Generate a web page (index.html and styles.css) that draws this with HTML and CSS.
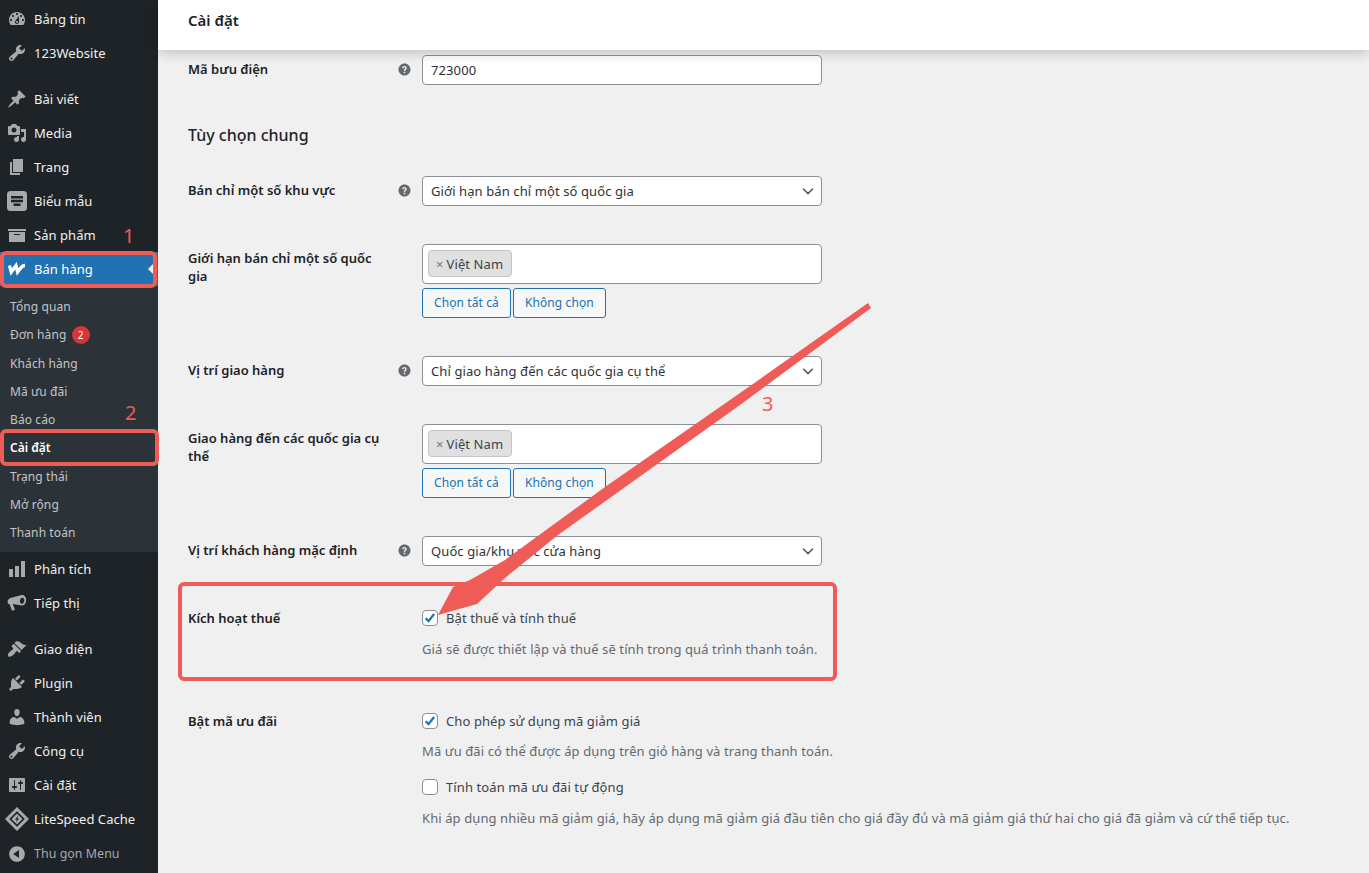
FILE: index.html
```html
<!DOCTYPE html>
<html lang="vi">
<head>
  <meta charset="UTF-8">
  <meta name="viewport" content="width=device-width, initial-scale=1.0">
  <title>Cài đặt</title>
  <link rel="stylesheet" href="styles.css">
</head>
<body>
  <svg class="defs" width="0" height="0">
    <symbol id="i-help" viewBox="0 0 20 20"><path d="M10 2c4.420 0 8 3.580 8 8s-3.580 8-8 8-8-3.580-8-8 3.580-8 8-8zm1 13v-2H9v2h2zm1.900-6.500c.2-1.900-1.200-3.200-3-3.200-1.700 0-2.900 1-3.100 2.800l1.900.3c.1-.8.5-1.300 1.200-1.300s1.100.5 1 1.100c-.1.6-.5.9-1 1.300-.7.6-.9 1.200-.9 2h2c0-.5.2-.8.8-1.300.6-.5 1-1 1.100-1.700z" fill-rule="evenodd"/></symbol>
    <symbol id="i-chevron" viewBox="0 0 16 16"><path d="M2.500 5.500l5.500 5.500 5.500-5.500" fill="none" stroke="#50575e" stroke-width="1.800"/></symbol>
    <symbol id="i-wrench" viewBox="0 0 20 20"><path d="M16.680 9.770c-1.340 1.340-3.300 1.670-4.950.99l-5.410 6.520c-.99.99-2.590.99-3.580 0s-.99-2.590 0-3.570l6.520-5.420c-.68-1.650-.35-3.610.99-4.950 1.280-1.280 3.120-1.620 4.720-1.060l-2.890 2.890 2.820 2.820 2.860-2.870c.53 1.580.18 3.390-1.080 4.650zM3.810 16.210c.4.39 1.040.39 1.430 0 .4-.4.4-1.040 0-1.430-.39-.4-1.030-.4-1.430 0-.39.39-.39 1.030 0 1.430z" fill-rule="evenodd"/></symbol>
    <symbol id="i-check" viewBox="0 0 16 16"><path d="M3 8.300l3.300 3.300 6.400-8.200" fill="none" stroke="#2271b1" stroke-width="2.600"/></symbol>
  </svg>

  <div class="container">
    <!-- Sidebar -->
    <nav class="sidebar">
      <ul class="menu">
        <li class="menu-item"><svg class="menu-icon" viewBox="0 0 20 20"><path d="M3.760 16h12.480c1.100-1.370 1.760-3.110 1.760-5 0-4.420-3.580-8-8-8s-8 3.580-8 8c0 1.890.660 3.630 1.760 5zM10 4c.55 0 1 .45 1 1s-.45 1-1 1-1-.45-1-1 .45-1 1-1zM6 6c.55 0 1 .45 1 1s-.45 1-1 1-1-.45-1-1 .45-1 1-1zm8 0c.55 0 1 .45 1 1s-.45 1-1 1-1-.45-1-1 .45-1 1-1zm-5.370 5.550L12 7v6c0 1.100-.9 2-2 2s-2-.9-2-2c0-.57.24-1.080.63-1.450zM4 10c.55 0 1 .45 1 1s-.45 1-1 1-1-.45-1-1 .45-1 1-1zm12 0c.55 0 1 .45 1 1s-.45 1-1 1-1-.45-1-1 .45-1 1-1zm-5 3c0-.55-.45-1-1-1s-1 .45-1 1 .45 1 1 1 1-.45 1-1z" fill-rule="evenodd"/></svg>Bảng tin</li>
        <li class="menu-item"><svg class="menu-icon"><use href="#i-wrench"/></svg>123Website</li>
      </ul>
      <ul class="menu">
        <li class="menu-item"><svg class="menu-icon" viewBox="0 0 20 20"><path d="M10.440 3.020l1.820-1.820 6.360 6.350-1.830 1.820c-1.050-.68-2.480-.57-3.410.36l-.75.75c-.92.93-1.040 2.350-.35 3.410l-1.830 1.820-2.410-2.410-2.800 2.790c-.42.42-3.380 2.710-3.800 2.290s1.860-3.390 2.280-3.810l2.790-2.790L4.100 9.360l1.830-1.820c1.050.69 2.480.57 3.400-.36l.75-.75c.93-.92 1.050-2.350.36-3.410z"/></svg>Bài viết</li>
        <li class="menu-item"><svg class="menu-icon" viewBox="0 0 20 20"><path d="M13 11V4c0-.55-.45-1-1-1h-1.670L9 1H5L3.670 3H2c-.55 0-1 .45-1 1v7c0 .55.45 1 1 1h10c.55 0 1-.45 1-1zM7 4.500c1.380 0 2.500 1.120 2.500 2.500S8.380 9.500 7 9.500 4.500 8.380 4.500 7 5.620 4.500 7 4.500zM14 6h5v10.500c0 1.380-1.120 2.500-2.500 2.500S14 17.880 14 16.500s1.120-2.500 2.500-2.500c.17 0 .34.02.5.05V9h-3V6zm-4 8.050V13h2v3.500c0 1.380-1.120 2.500-2.500 2.500S7 17.880 7 16.500 8.120 14 9.500 14c.17 0 .34.02.5.05z" fill-rule="evenodd"/></svg>Media</li>
        <li class="menu-item"><svg class="menu-icon" viewBox="0 0 20 20"><path d="M6 15V2h10v13H6zm-1 1h8v2H3V5h2v11z"/></svg>Trang</li>
        <li class="menu-item"><svg class="menu-icon" viewBox="0 0 20 20"><path d="M3.500 0h13A3.500 3.500 0 0 1 20 3.500v13a3.500 3.500 0 0 1-3.500 3.500h-13A3.500 3.500 0 0 1 0 16.500v-13A3.500 3.500 0 0 1 3.500 0zM4 5v2.400h12V5H4zm0 3.800v2.400h12V8.800H4zm2.500 3.800V15h7v-2.400h-7z" fill-rule="evenodd"/></svg>Biểu mẫu</li>
        <li class="menu-item"><svg class="menu-icon" viewBox="0 0 20 20"><path d="M19 4v2H1V4h18zM2 7h16v10H2V7zm11 3V9H7v1h6z" fill-rule="evenodd"/></svg>Sản phẩm</li>
        <li class="menu-item menu-item-active"><svg class="menu-icon menu-logo" viewBox="0 0 20 20"><path d="M2.500 6.500l1.800 6.500 4.700-6.500 1.600 6.500 2.600-3.300c1-1.300 2-3.200 4.800-3.200" fill="none" stroke="#fff" stroke-width="3.300"/></svg>Bán hàng</li>
        <li>
          <ul class="submenu">
            <li class="submenu-item">Tổng quan</li>
            <li class="submenu-item">Đơn hàng <span class="badge">2</span></li>
            <li class="submenu-item">Khách hàng</li>
            <li class="submenu-item">Mã ưu đãi</li>
            <li class="submenu-item">Báo cáo</li>
            <li class="submenu-item submenu-item-active">Cài đặt</li>
            <li class="submenu-item">Trạng thái</li>
            <li class="submenu-item">Mở rộng</li>
            <li class="submenu-item">Thanh toán</li>
          </ul>
        </li>
        <li class="menu-item"><svg class="menu-icon" viewBox="0 0 20 20"><path d="M18 18V2h-4v16h4zm-6 0V7H8v11h4zm-6 0v-8H2v8h4z"/></svg>Phân tích</li>
        <li class="menu-item"><svg class="menu-icon" viewBox="0 0 20 20"><path d="M17 2.500c1.600.8 2.600 3.300 2 6-.6 2.600-2.400 4.300-4.200 4.100L6 11l-.2.100 2.200 5.600-3 1.100-2.300-6.300C1 11 .4 9.700.6 8.200.9 6.600 2 5.400 3.500 5L13.600 2.300c1.200-.3 2.400-.3 3.400.2zm-1.600 2.300c-1.200 0-2.300 1.300-2.500 3s.7 2.900 1.900 2.900 2.300-1.300 2.500-3-.7-2.900-1.900-2.900z" fill-rule="evenodd"/></svg>Tiếp thị</li>
      </ul>
      <ul class="menu menu-last">
        <li class="menu-item"><svg class="menu-icon" viewBox="0 0 20 20"><path d="M14.480 11.060L7.410 3.990l1.500-1.500c.5-.56 2.300-.47 3.510.32 1.210.8 1.430 1.280 2.910 2.100 1.180.64 2.450 1.260 4.450.85zm-.71.71L6.700 4.700 4.930 6.470c-.39.39-.39 1.020 0 1.410l1.060 1.060c.39.39.39 1.030 0 1.420-.6.6-1.430 1.110-2.210 1.690-.35.26-.7.53-1.010.84C1.430 13.230 .5 16.500 1.500 17.500s3.800-.4 5.200-1.900c.31-.31.58-.66.84-1.010.58-.78 1.090-1.610 1.690-2.210.39-.39 1.030-.39 1.420 0l1.060 1.060c.39.39 1.020.39 1.410 0z"/></svg>Giao diện</li>
        <li class="menu-item"><svg class="menu-icon" viewBox="0 0 20 20"><path d="M13.110 4.360L9.870 7.600 8 5.730l3.240-3.240c.35-.34 1.050-.2 1.560.32.52.51.66 1.210.31 1.550zm-8 1.770l.91-1.120 9.010 9.010-1.190.84c-.71.71-2.630 1.160-3.820 1.160H6.140L4.900 17.260c-.59.59-1.540.59-2.120 0-.59-.58-.59-1.530 0-2.120l1.240-1.240v-3.880c0-1.130.4-3.190 1.090-3.890zm7.260 3.970l3.240-3.240c.34-.35 1.040-.21 1.550.31.52.51.66 1.210.31 1.550l-3.240 3.250z"/></svg>Plugin</li>
        <li class="menu-item"><svg class="menu-icon" viewBox="0 0 20 20"><path d="M10 9.250c-2.270 0-2.730-3.440-2.730-3.440C7 4.020 7.820 2 9.970 2c2.160 0 2.980 2.020 2.710 3.810 0 0-.41 3.440-2.680 3.440zm0 2.570L12.720 10c2.390 0 4.520 2.330 4.520 4.530v2.490s-3.650 1.130-7.240 1.130c-3.650 0-7.240-1.130-7.240-1.130v-2.490c0-2.250 1.940-4.480 4.470-4.480z"/></svg>Thành viên</li>
        <li class="menu-item"><svg class="menu-icon"><use href="#i-wrench"/></svg>Công cụ</li>
        <li class="menu-item"><svg class="menu-icon" viewBox="0 0 20 20"><path d="M18 16V4c0-.55-.45-1-1-1H3c-.55 0-1 .45-1 1v12c0 .55.45 1 1 1h14c.55 0 1-.45 1-1zM8 11h1c.55 0 1 .45 1 1s-.45 1-1 1H8v1.500c0 .28-.22.5-.5.5s-.5-.22-.5-.5V13H6c-.55 0-1-.45-1-1s.45-1 1-1h1V5.500c0-.28.22-.5.5-.5s.5.22.5.5V11zm5-2h-1c-.55 0-1-.45-1-1s.45-1 1-1h1V5.500c0-.28.22-.5.5-.5s.5.22.5.5V7h1c.55 0 1 .45 1 1s-.45 1-1 1h-1v5.500c0 .28-.22.5-.5.5s-.5-.22-.5-.5V9z" fill-rule="evenodd"/></svg>Cài đặt</li>
        <li class="menu-item menu-item-tall"><svg class="menu-icon menu-icon-lg" viewBox="0 0 24 24"><path d="M12 0l12 12-12 12L0 12zm0 4.200L4.200 12l7.800 7.800 7.800-7.800zM12 6.500l5.500 5.500-5.500 5.500L6.500 12zm1 2.200l-3 3.800h1.700L11 15.300l3-3.800h-1.700z" fill-rule="evenodd"/></svg>LiteSpeed Cache</li>
        <li class="menu-item menu-item-muted"><svg class="menu-icon" viewBox="0 0 20 20"><path d="M10 2.160c4.330 0 7.840 3.510 7.840 7.840s-3.510 7.840-7.840 7.840S2.160 14.330 2.160 10 5.710 2.160 10 2.160zm2 11.720V6.120L6.180 9.970z" fill-rule="evenodd"/></svg>Thu gọn Menu</li>
      </ul>
    </nav>

    <!-- Konten -->
    <div class="main-content">
      <div class="header"><h1>Cài đặt</h1></div>
      <form class="settings-form">
        <div class="row">
          <label>Mã bưu điện</label>
          <svg class="help"><use href="#i-help"/></svg>
          <div class="field"><div class="input">723000</div></div>
        </div>

        <h2>Tùy chọn chung</h2>

        <div class="row">
          <label>Bán chỉ một số khu vực</label>
          <svg class="help"><use href="#i-help"/></svg>
          <div class="field"><div class="input">Giới hạn bán chỉ một số quốc gia<svg class="chevron"><use href="#i-chevron"/></svg></div></div>
        </div>

        <div class="row">
          <label>Giới hạn bán chỉ một số quốc gia</label>
          <span></span>
          <div class="field">
            <div class="multi"><span class="tag"><i>×</i>Việt Nam</span></div>
            <div class="actions"><button type="button">Chọn tất cả</button><button type="button">Không chọn</button></div>
          </div>
        </div>

        <div class="row">
          <label>Vị trí giao hàng</label>
          <svg class="help"><use href="#i-help"/></svg>
          <div class="field"><div class="input">Chỉ giao hàng đến các quốc gia cụ thể<svg class="chevron"><use href="#i-chevron"/></svg></div></div>
        </div>

        <div class="row">
          <label>Giao hàng đến các quốc gia cụ thể</label>
          <span></span>
          <div class="field">
            <div class="multi"><span class="tag"><i>×</i>Việt Nam</span></div>
            <div class="actions"><button type="button">Chọn tất cả</button><button type="button">Không chọn</button></div>
          </div>
        </div>

        <div class="row">
          <label>Vị trí khách hàng mặc định</label>
          <svg class="help"><use href="#i-help"/></svg>
          <div class="field"><div class="input">Quốc gia/khu vực cửa hàng<svg class="chevron"><use href="#i-chevron"/></svg></div></div>
        </div>

        <div class="row row-check">
          <label>Kích hoạt thuế</label>
          <span></span>
          <div class="field field-wide">
            <div class="check"><span class="box box-on"><svg><use href="#i-check"/></svg></span>Bật thuế và tính thuế</div>
            <p class="desc">Giá sẽ được thiết lập và thuế sẽ tính trong quá trình thanh toán.</p>
          </div>
        </div>

        <div class="row row-check">
          <label>Bật mã ưu đãi</label>
          <span></span>
          <div class="field field-wide">
            <div class="check"><span class="box box-on"><svg><use href="#i-check"/></svg></span>Cho phép sử dụng mã giảm giá</div>
            <p class="desc">Mã ưu đãi có thể được áp dụng trên giỏ hàng và trang thanh toán.</p>
            <div class="check check-next"><span class="box"></span>Tính toán mã ưu đãi tự động</div>
            <p class="desc">Khi áp dụng nhiều mã giảm giá, hãy áp dụng mã giảm giá đầu tiên cho giá đầy đủ và mã giảm giá thứ hai cho giá đã giảm và cứ thế tiếp tục.</p>
          </div>
        </div>
      </form>
    </div>
  </div>

  <!-- Chu thich tren anh -->
  <div class="mark mark-sales"></div>
  <div class="mark mark-settings"></div>
  <div class="mark mark-tax"></div>
  <span class="step step-1">1</span>
  <span class="step step-2">2</span>
  <span class="step step-3">3</span>
  <svg class="arrow" width="1369" height="873" viewBox="0 0 1369 873"><path d="M868 303L740 393 605 487 505 560 470 580 453 587 438 615 477 604 505 578 558 535 740 405 871 308z"/></svg>
</body>
</html>
```

FILE: styles.css
```css
/* Reset & Body */
* {
  box-sizing: border-box;
}

body {
  margin: 0;
  height: 873px;
  overflow: hidden;
  position: relative;
  background: #f0f0f1;
  color: #3c434a;
  font-family: "Noto Sans", sans-serif;
  font-size: 13px;
  letter-spacing: 0.1px;
  line-height: 20px;
}

.defs {
  position: absolute;
}

.container {
  display: flex;
  height: 100%;
}

/* Sidebar */
.sidebar {
  width: 158px;
  flex: none;
  background: #1d2327;
  padding-top: 2px;
}

.menu,
.submenu {
  list-style: none;
  margin: 0;
  padding: 0;
}

.menu + .menu {
  margin-top: 11.500px;
}

.menu + .menu-last {
  margin-top: 12px;
}

.menu-item {
  display: flex;
  align-items: center;
  height: 34px;
  padding-left: 7px;
  color: #f0f0f1;
  font-size: 13px;
  letter-spacing: 0.05px;
  white-space: nowrap;
}

.menu-item-tall {
  height: 35.500px;
}

.menu-icon {
  flex: none;
  width: 20px;
  height: 20px;
  margin-right: 7px;
  fill: #a7aaad;
}

.menu-icon-lg {
  width: 24px;
  height: 24px;
  margin: 0 5px 0 -2px;
}

.menu-item-active {
  position: relative;
  background: #2271b1;
  color: #fff;
}

.menu-item-active::after {
  content: "";
  position: absolute;
  right: 4px;
  top: 11px;
  border: 6px solid transparent;
  border-left-width: 0;
  border-right-color: #f0f0f1;
}

.menu-item-muted {
  color: #a7aaad;
  font-size: 12.400px;
}

.submenu {
  background: #2c3338;
  padding: 7.500px 0 4.250px;
}

.submenu-item {
  height: 28.250px;
  padding-left: 10px;
  color: #c3c4c7;
  font-size: 12px;
  line-height: 28px;
}

.submenu-item-active {
  color: #fff;
  font-weight: 600;
  letter-spacing: 0;
}

.badge {
  display: inline-block;
  width: 18px;
  height: 18px;
  margin-left: 2px;
  border-radius: 50%;
  background: #d63638;
  color: #fff;
  font-size: 10px;
  line-height: 18px;
  text-align: center;
}

/* Main Content */
.main-content {
  flex: 1;
  min-width: 0;
}

.header {
  height: 50px;
  padding: 10px 30px 0;
  background: #fff;
  box-shadow: 0 3px 12px rgba(0, 0, 0, 0.2);
  position: relative;
}

.header h1 {
  margin: 0;
  color: #1d2327;
  font-size: 15px;
  font-weight: 600;
  letter-spacing: 0;
  line-height: 20px;
}

.settings-form {
  padding: 5px 0 0 30px;
}

.settings-form h2 {
  margin: 38px 0 29px;
  color: #1d2327;
  font-size: 16px;
  font-weight: 500;
  letter-spacing: 0;
  line-height: 24px;
}

.row {
  display: grid;
  grid-template-columns: 200px 34px 1fr;
  align-items: start;
}

.row + .row {
  margin-top: 38px;
}

.row label {
  padding-top: 5px;
  color: #1d2327;
  font-weight: 600;
  letter-spacing: 0;
  line-height: 18px;
}

.help {
  width: 15px;
  height: 15px;
  margin: 7px 0 0 8.500px;
  fill: #646970;
}

.field {
  width: 400px;
}

.field-wide {
  width: 900px;
}

.input {
  display: flex;
  align-items: center;
  justify-content: space-between;
  height: 30px;
  padding: 0 6px 0 8px;
  border: 1px solid #8c8f94;
  border-radius: 4px;
  background: #fff;
  color: #2c3338;
}

.chevron {
  width: 14px;
  height: 14px;
}

.multi {
  height: 40px;
  padding: 5px 5px;
  border: 1px solid #8c8f94;
  border-radius: 4px;
  background: #fff;
}

.tag {
  display: inline-block;
  height: 27px;
  padding: 0 8px 0 7px;
  border: 1px solid #c3c4c7;
  border-radius: 4px;
  background: #e0e0e0;
  line-height: 26px;
}

.tag i {
  margin-right: 3px;
  color: #777;
  font-style: normal;
}

.actions {
  display: flex;
  gap: 2px;
  margin-top: 4px;
}

.actions button {
  height: 30px;
  padding: 0 11px;
  border: 1px solid #2271b1;
  border-radius: 3px;
  background: #f6f7f7;
  color: #2271b1;
  font: inherit;
  font-size: 12px;
  letter-spacing: 0.1px;
}

/* Checkbox rows */
.row-check {
  padding-bottom: 10px;
}

.check {
  display: flex;
  align-items: center;
  height: 20px;
  margin-top: 4px;
}

.check-next {
  margin-top: 16px;
}

.box {
  width: 16px;
  height: 16px;
  margin-right: 8px;
  border: 1px solid #8c8f94;
  border-radius: 4px;
  background: #fff;
}

.box svg {
  display: block;
  width: 14px;
  height: 14px;
}

.desc {
  margin: 10.500px 0 0;
  color: #646970;
  white-space: nowrap;
}

/* Chu thich */
.mark {
  position: absolute;
  border: 4px solid #ef5b57;
  border-radius: 6px;
}

.mark-sales {
  left: 0;
  top: 251px;
  width: 157px;
  height: 37px;
}

.mark-settings {
  left: 0;
  top: 429px;
  width: 159px;
  height: 37px;
}

.mark-tax {
  left: 178px;
  top: 582px;
  width: 659px;
  height: 99px;
}

.step {
  position: absolute;
  color: #ef5b57;
  font-size: 20px;
  line-height: 24px;
}

.step-1 {
  left: 123px;
  top: 224px;
}

.step-2 {
  left: 125px;
  top: 401px;
}

.step-3 {
  left: 762px;
  top: 392px;
}

.arrow {
  position: absolute;
  left: 0;
  top: 0;
  fill: #ef5b57;
}
```
